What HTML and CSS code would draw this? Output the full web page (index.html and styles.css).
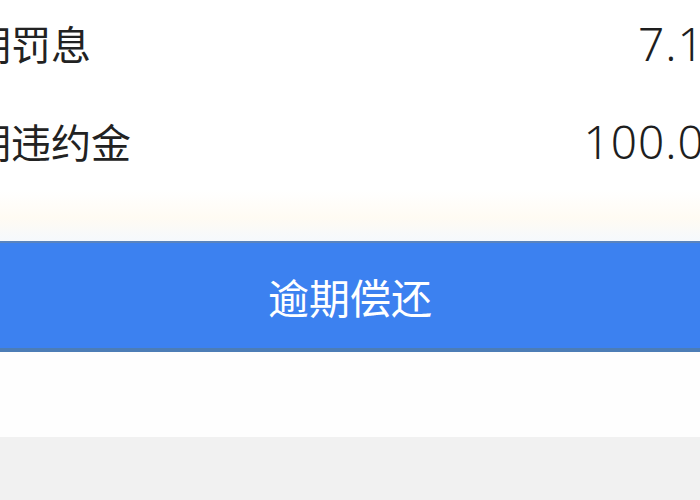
FILE: index.html
```html
<!DOCTYPE html>
<html lang="zh-CN">
<head>
<meta charset="utf-8">
<link rel="stylesheet" href="styles.css">
</head>
<body>
<div class="page">
  <div class="list">
    <div class="row">
      <span class="label">逾期罚息</span>
      <span class="value">7.19</span>
    </div>
    <div class="row">
      <span class="label">逾期违约金</span>
      <span class="value">100.00</span>
    </div>
  </div>
  <div class="spacer"></div>
  <button class="pay-btn">逾期偿还</button>
  <div class="after"></div>
  <div class="footer"></div>
</div>
</body>
</html>
```

FILE: styles.css
```css
html, body {
  margin: 0;
  padding: 0;
  width: 700px;
  height: 500px;
  overflow: hidden;
  background: #ffffff;
}
.page {
  display: flex;
  flex-direction: column;
  width: 700px;
  height: 500px;
}
.list {
  margin-top: -6px;
  margin-left: -69px;
  margin-right: -32px;
  display: flex;
  flex-direction: column;
}
.row {
  height: 98px;
  display: flex;
  align-items: center;
  justify-content: space-between;
}
.label {
  font-family: "Noto Sans CJK SC", "Noto Sans", sans-serif;
  font-size: 40px;
  line-height: 1;
  color: #222222;
}
.value {
  font-family: "Noto Sans", sans-serif;
  font-weight: 300;
  font-size: 46px;
  line-height: 1;
  letter-spacing: 1px;
  color: #1e1e1e;
}
.spacer {
  height: 51px;
  background: linear-gradient(#ffffff 0%, #fffbf3 55%, #f5f9fd 100%);
}
.pay-btn {
  height: 111px;
  border: none;
  border-top: 2px solid #5a84bd;
  border-bottom: 4px solid #4c7db6;
  background: #3c81f0;
  color: #ffffff;
  font-family: "Noto Sans CJK SC", "Noto Sans", sans-serif;
  font-size: 41px;
  padding: 0;
  margin: 0;
  width: 100%;
}
.after {
  height: 85px;
  background: #fefefe;
}
.footer {
  flex: 1;
  background: #f1f1f1;
}
```
